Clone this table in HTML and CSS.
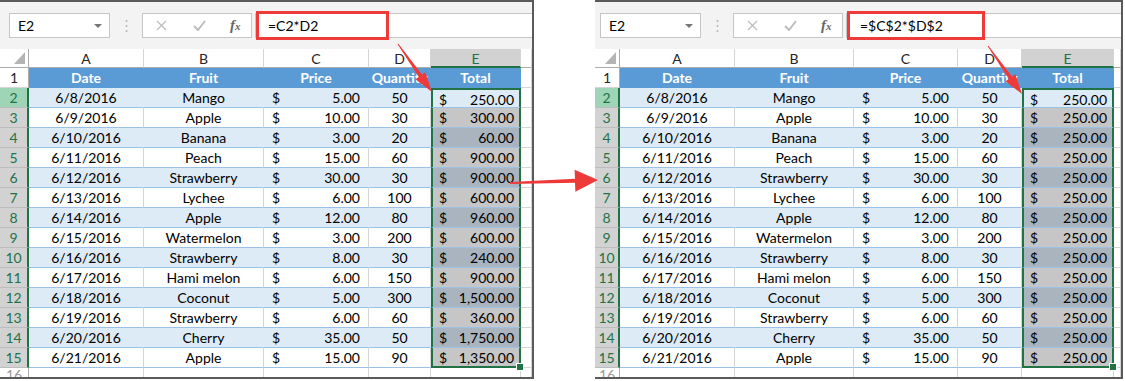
FILE: index.html
```html
<!DOCTYPE html>
<html lang="en">
<head>
  <meta charset="UTF-8" />
  <title>Absolute reference in Excel</title>
  <link rel="stylesheet" href="styles.css">
</head>
<body>
  <div class="page">
    <div class="sheet sheet-left">
      <div class="toolbar">
        <div class="name-box">E2<span class="caret"></span></div>
        <div class="grip">
          <svg width="3" height="14" viewBox="0 0 3 14"><circle cx="1.5" cy="2" r="1"/><circle cx="1.5" cy="7" r="1"/><circle cx="1.5" cy="12" r="1"/></svg>
        </div>
        <div class="fx-box">
          <svg class="icon-x" width="11" height="11" viewBox="0 0 11 11"><path d="M1 1L10 10M10 1L1 10"/></svg>
          <svg class="icon-check" width="13" height="11" viewBox="0 0 13 11"><path d="M1 6L5 10L12 1"/></svg>
          <span class="fx">f<small>x</small></span>
        </div>
        <div class="formula"><span class="formula-text">=C2*D2</span></div>
      </div>
      <div class="grid" data-totals="left"></div>
    </div>

    <div class="sheet sheet-right">
      <div class="toolbar">
        <div class="name-box">E2<span class="caret"></span></div>
        <div class="grip">
          <svg width="3" height="14" viewBox="0 0 3 14"><circle cx="1.5" cy="2" r="1"/><circle cx="1.5" cy="7" r="1"/><circle cx="1.5" cy="12" r="1"/></svg>
        </div>
        <div class="fx-box">
          <svg class="icon-x" width="11" height="11" viewBox="0 0 11 11"><path d="M1 1L10 10M10 1L1 10"/></svg>
          <svg class="icon-check" width="13" height="11" viewBox="0 0 13 11"><path d="M1 6L5 10L12 1"/></svg>
          <span class="fx">f<small>x</small></span>
        </div>
        <div class="formula"><span class="formula-text">=$C$2*$D$2</span></div>
      </div>
      <div class="grid" data-totals="right"></div>
    </div>

    <!-- red callout arrows drawn over both screenshots -->
    <svg class="arrows" width="1125" height="381" viewBox="0 0 1125 381">
      <g id="down-arrow">
        <polygon points="397.6,44.3 418.8,76.9 415.5,79.2 432,92 425.3,72.2 422,74.5 398.4,43.7"/>
      </g>
      <use href="#down-arrow" transform="translate(590,2)"/>
      <polygon points="510,184 575,182.8 575.4,191.8 598,180 574.6,169.8 575,178.8 510,182"/>
    </svg>
  </div>

  <script>
    const fruitRows = [
      ["6/8/2016", "Mango", "5.00", "50"],
      ["6/9/2016", "Apple", "10.00", "30"],
      ["6/10/2016", "Banana", "3.00", "20"],
      ["6/11/2016", "Peach", "15.00", "60"],
      ["6/12/2016", "Strawberry", "30.00", "30"],
      ["6/13/2016", "Lychee", "6.00", "100"],
      ["6/14/2016", "Apple", "12.00", "80"],
      ["6/15/2016", "Watermelon", "3.00", "200"],
      ["6/16/2016", "Strawberry", "8.00", "30"],
      ["6/17/2016", "Hami melon", "6.00", "150"],
      ["6/18/2016", "Coconut", "5.00", "300"],
      ["6/19/2016", "Strawberry", "6.00", "60"],
      ["6/20/2016", "Cherry", "35.00", "50"],
      ["6/21/2016", "Apple", "15.00", "90"]
    ];

    const totals = {
      left: ["250.00", "300.00", "60.00", "900.00", "900.00", "600.00", "960.00",
             "600.00", "240.00", "900.00", "1,500.00", "360.00", "1,750.00", "1,350.00"],
      right: fruitRows.map(() => "250.00")
    };

    function addCell(grid, cls, html) {
      const div = document.createElement("div");
      div.className = "cell " + cls;
      if (html !== undefined) div.innerHTML = html;
      grid.appendChild(div);
      return div;
    }

    function money(value) {
      return `<span>$</span><span>${value}</span>`;
    }

    document.querySelectorAll(".grid").forEach(grid => {
      const list = totals[grid.dataset.totals];

      addCell(grid, "corner", "<span class='select-all'></span>");
      ["A", "B", "C", "D", "E", ""].forEach(letter => {
        addCell(grid, "col-head" + (letter === "E" ? " is-selected" : ""), letter);
      });

      addCell(grid, "row-head", "1");
      ["Date", "Fruit", "Price", "Quantity", "Total"].forEach(title => {
        addCell(grid, "table-head", title);
      });
      addCell(grid, "blank");

      fruitRows.forEach((row, i) => {
        const n = i + 2;
        const band = n % 2 === 0 ? " band" : "";
        let sel = " sel-col";
        if (n === 2) sel += " sel-top";
        if (n === 15) sel += " sel-bottom";
        if (n > 2) sel += " is-shaded";

        addCell(grid, "row-head is-selected" + (n === 2 ? " is-active" : ""), n);
        addCell(grid, "text" + band, row[0]);
        addCell(grid, "text" + band, row[1]);
        addCell(grid, "money" + band, money(row[2]));
        addCell(grid, "text" + band, row[3]);
        addCell(grid, "money total" + band + sel, money(list[i]));
        addCell(grid, "blank");
      });

      addCell(grid, "row-head row-cut", "16");
      for (let c = 0; c < 6; c++) addCell(grid, "blank");
    });
  </script>
</body>
</html>
```

FILE: styles.css
```css
body {
  margin: 0;
  background: #fff;
  font-family: Lato, "Liberation Sans", sans-serif;
  font-size: 14px;
  color: #000;
}

.page {
  position: relative;
  display: flex;
  width: 1125px;
  height: 381px;
  overflow: hidden;
}

.sheet {
  box-sizing: border-box;
  height: 379px;
  display: flex;
  flex-direction: column;
  background: #fff;
  border-top: 2px solid #5a5a5a;
  border-right: 2px solid #5a5a5a;
  border-bottom: 2px solid #5a5a5a;
}

.sheet-left {
  width: 534px;
  --pad: 9px;
}

.sheet-right {
  width: 528px;
  margin-left: 61px;
  --pad: 5px;
}

/* formula bar */

.toolbar {
  flex: none;
  height: 47px;
  display: flex;
  align-items: center;
  padding-left: var(--pad);
  background: #f3f3f3;
}

.name-box {
  box-sizing: border-box;
  width: 101px;
  height: 25px;
  display: flex;
  align-items: center;
  justify-content: space-between;
  padding: 0 7px 0 8px;
  background: #fff;
  border: 1px solid #c6c6c6;
}

.caret {
  width: 0;
  height: 0;
  border-left: 4px solid transparent;
  border-right: 4px solid transparent;
  border-top: 4px solid #767676;
}

.grip {
  width: 32px;
  display: flex;
  justify-content: center;
}

.grip svg {
  fill: #b4b4b4;
}

.fx-box {
  box-sizing: border-box;
  width: 110px;
  height: 25px;
  display: flex;
  align-items: center;
  padding-left: 13px;
  gap: 26px;
  background: #fff;
  border: 1px solid #c6c6c6;
}

.fx-box svg {
  fill: none;
  stroke: #bdbdbd;
}

.icon-x {
  stroke-width: 1.3;
}

.icon-check {
  stroke-width: 2;
}

.fx {
  margin-left: -2px;
  font-family: "Liberation Serif", serif;
  font-style: italic;
  font-weight: bold;
  font-size: 15px;
  color: #666;
}

.fx small {
  font-size: 11px;
}

.formula {
  flex: 1;
  box-sizing: border-box;
  height: 25px;
  margin-left: 3px;
  display: flex;
  background: #fff;
  border: 1px solid #c6c6c6;
  border-right: none;
}

.formula-text {
  width: 127px;
  margin-left: 3px;
  padding-left: 9px;
  box-sizing: border-box;
  line-height: 23px;
  outline: 3px solid #ef3a3a;
}

.sheet-right .formula-text {
  width: 132px;
  padding-left: 10px;
}

/* worksheet grid */

.grid {
  flex: 1;
  display: grid;
  grid-template-rows: 19px;
  grid-auto-rows: 20px;
  overflow: hidden;
}

.sheet-left .grid {
  grid-template-columns: 29px 115px 120px 105px 62px 90px 1fr;
}

.sheet-right .grid {
  grid-template-columns: 25px 115px 119px 104px 64px 92px 1fr;
}

.cell {
  box-sizing: border-box;
  position: relative;
  line-height: 20px;
  white-space: nowrap;
  overflow: hidden;
  border-right: 1px solid #d4d4d4;
  border-bottom: 1px solid #d4d4d4;
}

.corner {
  display: flex;
  justify-content: flex-end;
  align-items: flex-end;
  padding: 0 3px 3px 0;
  background: #fff;
  border-right-color: #ababab;
  border-bottom-color: #ababab;
}

.select-all {
  width: 0;
  height: 0;
  border-left: 11px solid transparent;
  border-bottom: 12px solid #b4b4b4;
}

.col-head {
  line-height: 19px;
  text-align: center;
  color: #262626;
  background: #fff;
  border-bottom-color: #ababab;
}

.col-head.is-selected {
  background: #d2d2d2;
  color: #217346;
  border-bottom: 2px solid #217346;
}

.row-head {
  text-align: center;
  color: #262626;
  background: #fff;
  border-right-color: #ababab;
}

.row-head.is-selected {
  background: #d2d2d2;
  color: #217346;
  border-right: 2px solid #217346;
  border-bottom-color: #bdbdbd;
}

.row-head.is-active {
  background: #9fd5b7;
}

.row-cut {
  line-height: 14px;
  color: #9a9a9a;
}

.table-head {
  text-align: center;
  font-weight: bold;
  color: #fff;
  background: #5b9bd5;
  border-right-color: #5b9bd5;
  border-bottom-color: #5b9bd5;
}

.text {
  text-align: center;
  border-bottom-color: #9bc2e6;
}

.money {
  display: flex;
  justify-content: space-between;
  padding: 0 8px;
  border-bottom-color: #9bc2e6;
}

.band {
  background: #ddebf7;
  border-right-color: #ddebf7;
}

.total {
  padding: 0 5px 0 6px;
}

.is-shaded {
  background: #c6c6c6;
}

.band.is-shaded {
  background: #a9b4bf;
}

.sel-col {
  overflow: visible;
  border-left: 2px solid #217346;
  border-right: 2px solid #217346;
}

.sel-top {
  border-top: 2px solid #217346;
}

.sel-bottom {
  border-bottom: 2px solid #217346;
}

.sel-bottom::after {
  content: "";
  position: absolute;
  right: -5px;
  bottom: -5px;
  z-index: 1;
  width: 6px;
  height: 6px;
  background: #217346;
  border: 1px solid #fff;
}

.blank {
  background: #fff;
}

/* annotation layer */

.arrows {
  position: absolute;
  top: 0;
  left: 0;
  pointer-events: none;
  fill: #ef3a3a;
}
```
